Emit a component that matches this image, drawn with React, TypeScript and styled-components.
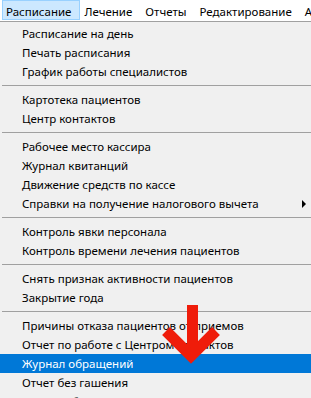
import styled, { createGlobalStyle } from "styled-components";

const GlobalStyle = createGlobalStyle`
  html, body {
    margin: 0;
    padding: 0;
    background: #f0f0f0;
  }
  body {
    font-family: "Noto Sans", "Liberation Sans", sans-serif;
    font-size: 11.5px;
    color: #000;
  }
`;

const Screen = styled.div`
  position: relative;
  width: 311px;
  height: 398px;
  overflow: hidden;
  background: #f0f0f0;
`;

const MenuBar = styled.div`
  display: flex;
  align-items: flex-start;
  height: 21px;
  padding-left: 2px;
  background: #ffffff;
  white-space: nowrap;
`;

const BarItem = styled.div<{ $open?: boolean }>`
  height: 20px;
  line-height: 16px;
  padding: 3px 8px 0 3px;
  box-sizing: border-box;
  border: 1px solid ${({ $open }) => ($open ? "#99d1ff" : "transparent")};
  background: ${({ $open }) => ($open ? "#cce8ff" : "transparent")};
`;

const Dropdown = styled.div`
  border-top: 1px solid #a0a0a0;
  padding-top: 2px;
  background: #f0f0f0;
`;

const Item = styled.div<{ $active?: boolean }>`
  display: flex;
  align-items: center;
  justify-content: space-between;
  height: 19px;
  line-height: 19px;
  padding: 0 5px 0 22px;
  white-space: nowrap;
  background: ${({ $active }) => ($active ? "#0078d7" : "transparent")};
  color: ${({ $active }) => ($active ? "#ffffff" : "#000000")};
`;

const SubArrow = styled.span`
  width: 0;
  height: 0;
  border-top: 4px solid transparent;
  border-bottom: 4px solid transparent;
  border-left: 4px solid #000;
`;

const Separator = styled.div`
  height: 1px;
  margin: 4px 0 4px 2px;
  background: #a0a0a0;
`;

const Pointer = styled.svg`
  position: absolute;
  left: 0;
  top: 0;
  pointer-events: none;
`;

type Entry = { label: string; sub?: boolean; active?: boolean } | "sep";

const entries: Entry[] = [
  { label: "Расписание на день" },
  { label: "Печать расписания" },
  { label: "График работы специалистов" },
  "sep",
  { label: "Картотека пациентов" },
  { label: "Центр контактов" },
  "sep",
  { label: "Рабочее место кассира" },
  { label: "Журнал квитанций" },
  { label: "Движение средств по кассе" },
  { label: "Справки на получение налогового вычета", sub: true },
  "sep",
  { label: "Контроль явки персонала" },
  { label: "Контроль времени лечения пациентов" },
  "sep",
  { label: "Снять признак активности пациентов" },
  { label: "Закрытие года" },
  "sep",
  { label: "Причины отказа пациентов от приемов" },
  { label: "Отчет по работе с Центром контактов" },
  { label: "Журнал обращений", active: true },
  { label: "Отчет без гашения" },
  { label: "Анализ обращений" },
];

const App = () => {
  return (
    <Screen>
      <GlobalStyle />
      <MenuBar>
        <BarItem $open>Расписание</BarItem>
        <BarItem>Лечение</BarItem>
        <BarItem>Отчеты</BarItem>
        <BarItem>Редактирование</BarItem>
        <BarItem>Администрирование</BarItem>
      </MenuBar>
      <Dropdown>
        {entries.map((e, i) =>
          e === "sep" ? (
            <Separator key={i} />
          ) : (
            <Item key={i} $active={e.active}>
              <span>{e.label}</span>
              {e.sub && <SubArrow />}
            </Item>
          )
        )}
      </Dropdown>
      <Pointer width="311" height="398" viewBox="0 0 311 398">
        <g stroke="#ef1c0a" strokeWidth="11" fill="none" strokeLinecap="butt" strokeLinejoin="miter">
          <line x1="192.5" y1="305" x2="192.5" y2="352" />
          <polyline points="166,331 191,356 216,331" />
        </g>
      </Pointer>
    </Screen>
  );
};

export default App;
